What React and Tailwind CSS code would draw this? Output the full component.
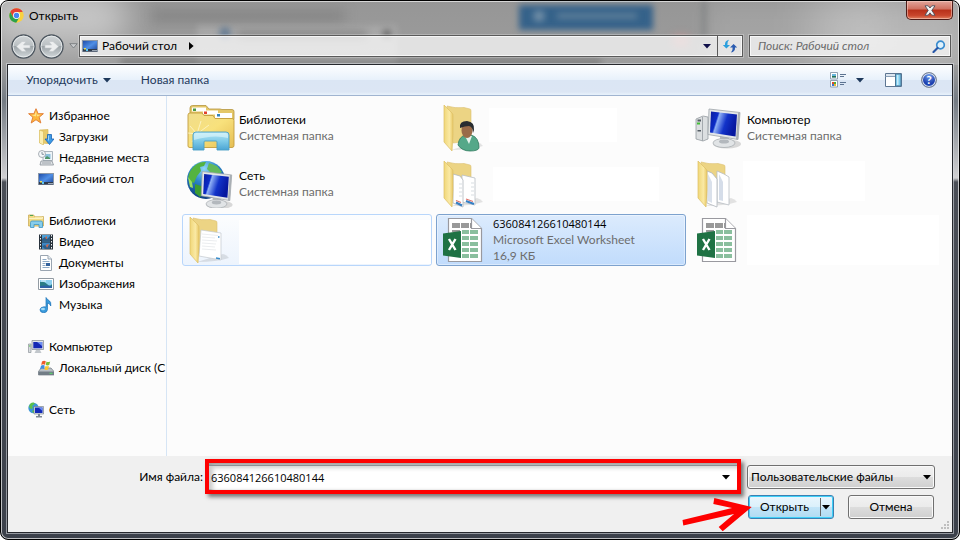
import React from "react";

const Desktop = () => (
  <svg width="16" height="16" viewBox="0 0 16 16" className="shrink-0">
    <defs>
      <linearGradient id="desk" x1="0" y1="0" x2="1" y2="1">
        <stop offset="0" stopColor="#1b49a5" />
        <stop offset=".5" stopColor="#4f8fe6" />
        <stop offset="1" stopColor="#1a3f92" />
      </linearGradient>
    </defs>
    <rect x=".5" y="2.500" width="15" height="11" fill="url(#desk)" stroke="#8a97a8" />
    <rect x="1" y="11" width="14" height="2.500" fill="#303b4c" />
    <path d="M2 10h2v1.500H2z" fill="#e9e05a" />
    <path d="M4 11h2v2H4z" fill="#59c5f2" />
    <path d="M10 12h5v1h-5z" fill="#9ba7b5" />
  </svg>
);

const Star = () => (
  <svg width="16" height="16" viewBox="0 0 16 16" className="shrink-0">
    <path d="M8 .7l2.100 5h5.300l-4.200 3.500 1.600 5.800L8 11.700 3.200 15l1.600-5.800L.6 5.700h5.300z" fill="#fdb73a" stroke="#e2803a" strokeLinejoin="round" />
    <path d="M8 3l1.400 3.700 3.600.1-4 1.700z M8 3L6.700 6.700l-3.500.2L8 8.500z" fill="#ffe48a" />
  </svg>
);

const Downloads = () => (
  <svg width="16" height="16" viewBox="0 0 16 16" className="shrink-0">
    <path d="M2 1l8-.5v14L2 14z" fill="#e8cb6b" stroke="#d1b14e" strokeWidth=".6" />
    <path d="M1.500 1l4 1.500V16l-4-2z" fill="#fbeeb0" stroke="#d6b856" strokeWidth=".6" />
    <path d="M9.500 5.500h4V10H16l-4.500 5.500L7 10h2.500z" fill="#3d9be5" stroke="#1c63b5" strokeWidth=".8" />
    <path d="M10.500 6.500v5" stroke="#9bd3fa" />
  </svg>
);

const Recent = () => (
  <svg width="16" height="16" viewBox="0 0 16 16" className="shrink-0">
    <path d="M5 1.500h9.500v9H5z" fill="#eef4f8" stroke="#98a3ad" strokeWidth=".8" />
    <path d="M7 4h5.500v5H7z" fill="#8cc0dc" />
    <path d="M7 8l2-2 3 2v1H7z" fill="#4f9668" />
    <path d="M3 11h11l1.500 4H2z" fill="#dfe3e6" stroke="#8a9299" strokeWidth=".8" />
    <path d="M4 13h9" stroke="#8a9299" strokeWidth=".8" />
    <circle cx="4" cy="4" r="3.500" fill="#f5f8fa" stroke="#969da5" strokeWidth=".8" />
    <path d="M4 2v2.300h2" fill="none" stroke="#6d7c8b" strokeWidth=".8" />
  </svg>
);

const LibrarySmall = () => (
  <svg width="16" height="16" viewBox="0 0 16 16" className="shrink-0">
    <path d="M.6 2h5l1 1.500h8.800V13H.6z" fill="#f3dc85" stroke="#c5a54c" strokeWidth=".8" />
    <path d="M2 2.500h3" stroke="#4fa552" />
    <path d="M7 4h7.500v1.500H1" stroke="#fff6ce" fill="none" strokeWidth=".8" />
    <path d="M2.500 14.500v-5q0-1.500 1.500-1.500h9q1.500 0 1.500 1.500v5h-3.500v-3h-5v3z" fill="#86cdec" stroke="#3e96c6" strokeWidth=".8" />
  </svg>
);

const Video = () => (
  <svg width="16" height="16" viewBox="0 0 16 16" className="shrink-0">
    <path d="M1 .5h14v15H1z" fill="#28323c" />
    <path d="M4 1h8v6.500H4z" fill="#4e9fd6" />
    <path d="M4 8.500h8V15H4z" fill="#3e86c3" />
    <path d="M4 5l3-2 2 2 3-3v5.500H4zM4 12l3-1 2 2 3-3v5H7z" fill="#2f5e86" />
    <path d="M7 4l2-2v3zM8 11l3-1-2 4z" fill="#dc6340" />
    <path d="M2.500 1v14M13.500 1v14" stroke="#f0f4f7" strokeDasharray="1.500 1.500" />
  </svg>
);

const Doc = () => (
  <svg width="16" height="16" viewBox="0 0 16 16" className="shrink-0">
    <path d="M2.500.5H10L13.500 4v11.500h-11z" fill="#fff" stroke="#9aa5b1" />
    <path d="M10 .5V4h3.500" fill="#e5edf3" stroke="#9aa5b1" />
    <path d="M4.500 4.500h4M4.500 6.500h7M4.500 8.500h3M4.500 10.500h3M4.500 12.500h7" stroke="#8fabc6" />
    <path d="M8 8h4v3H8z" fill="#34639e" />
  </svg>
);

const Picture = () => (
  <svg width="16" height="16" viewBox="0 0 16 16" className="shrink-0">
    <path d="M.5 2.500h15v11H.5z" fill="#fff" stroke="#929ba3" />
    <path d="M2 4h12v8H2z" fill="#8dd0ef" />
    <path d="M2 6q4-1 7 2t5 0v4H2z" fill="#2b7d86" />
    <path d="M2 10q6-1 12 .5V12H2z" fill="#2e62a6" />
    <path d="M3 5h5" stroke="#edf9ff" />
  </svg>
);

const Music = () => (
  <svg width="16" height="16" viewBox="0 0 16 16" className="shrink-0">
    <path d="M8 .5q.6 1.600 3 3t1.800 5.500q-.8-2.500-3.300-3v6.500q-.3 3-3.700 3.300Q2 15.500 2 12.800 2.500 10 6 9.800L8 10z" fill="#3a9bdc" stroke="#1e72b8" strokeWidth=".7" />
    <ellipse cx="5" cy="12" rx="2" ry="1.200" fill="#a4dcf8" />
  </svg>
);

const ComputerSmall = () => (
  <svg width="16" height="16" viewBox="0 0 16 16" className="shrink-0">
    <path d="M.5 5H3v8.500H.5z" fill="#d8dcdf" stroke="#8d9499" strokeWidth=".7" />
    <path d="M1 7h1.500" stroke="#4cbf46" />
    <path d="M4 1.500h11.500v9H4z" fill="#dfe3e8" stroke="#8b939b" strokeWidth=".8" />
    <path d="M5.300 3h9v6.300h-9z" fill="#1428b4" />
    <path d="M9 3h5v4z" fill="#6f8ff0" />
    <path d="M8 11h4l1.500 3H6.500z" fill="#c2c7cc" />
  </svg>
);

const Disk = () => (
  <svg width="16" height="16" viewBox="0 0 16 16" className="shrink-0">
    <path d="M3 8h10l3 3.500V15H.5v-3.500z" fill="#b9c0c6" stroke="#737c84" strokeWidth=".7" />
    <path d="M.5 11.500H16V15H.5z" fill="#727d86" />
    <path d="M11.500 13.300h3" stroke="#58e06a" />
    <path d="M4 1.500q2-1.500 3.800-.3L7 4.700q-2-1-3.800.3z" fill="#ee5b2a" />
    <path d="M8.500 1.500q1.500 1 3.700 0l-1 3.500q-1.700.9-3.500 0z" fill="#79be3c" />
    <path d="M3 5.700q2-1.200 3.700-.2L6 9q-2-1-4 .3z" fill="#3d8ce0" />
    <path d="M7.500 5.900q1.700.9 3.500 0l-1 3.500q-1.700 1-3.500 0z" fill="#fbc62f" />
  </svg>
);

const NetworkSmall = () => (
  <svg width="16" height="16" viewBox="0 0 16 16" className="shrink-0">
    <circle cx="5.500" cy="6" r="5.200" fill="#3b96d8" />
    <path d="M2 2q3-2.500 5-.5L4 4l1 2-2 1-2-2zM5 8l3 1-2 2-2-1z" fill="#5cc14c" />
    <path d="M6 4.500h9.500v7.500H6z" fill="#e0e5ea" stroke="#69737c" strokeWidth=".6" />
    <path d="M7 5.500h7.500V11H7z" fill="#1329b8" />
    <path d="M10.500 5.500h4V9z" fill="#6a8df0" />
    <path d="M10 12h2v2h2v1.500H8V14h2z" fill="#7f8a94" />
  </svg>
);

const Monitor = ({ id }) => (
  <g>
    <defs>
      <linearGradient id={id} x1="0" y1="0" x2="1" y2=".3">
        <stop offset="0" stopColor="#0a1b9c" />
        <stop offset=".3" stopColor="#0c2cc8" />
        <stop offset=".36" stopColor="#8fb0f6" />
        <stop offset=".65" stopColor="#1233c9" />
        <stop offset="1" stopColor="#0718a0" />
      </linearGradient>
    </defs>
    <ellipse cx="33" cy="43" rx="14" ry="4.500" fill="#000" opacity=".14" />
    <path d="M26 33l9 3v5h-9z" fill="#b5babf" />
    <ellipse cx="30" cy="42" rx="11" ry="4.500" fill="#e1e4e6" stroke="#a4a9ae" strokeWidth=".7" />
    <ellipse cx="30" cy="40.500" rx="5" ry="2" fill="#b3b8bd" />
    <path d="M15 8l31 3.500-2 27L14 33.500z" fill="#e3e6e8" stroke="#9ea4a9" strokeWidth=".8" />
    <path d="M44 11.500l2 .2-2 27-2-.5z" fill="#a9afb4" />
    <path d="M17 10.500l26 3-1.500 22L16 31.500z" fill={`url(#${id})`} />
  </g>
);

const ComputerBig = () => (
  <svg width="48" height="48" viewBox="0 0 48 48" className="shrink-0">
    <path d="M1 15l7-3 5 1v22l-5 2-7-2z" fill="#dcdfe1" stroke="#969ca1" strokeWidth=".8" />
    <path d="M7.500 13v24" stroke="#a4a9ae" />
    <path d="M2.500 15.500h3.500v2h-3.500zM2.500 26h3.500v1.500h-3.500z" fill="#555d64" />
    <path d="M2 18.500h3v2H2z" fill="#44bd38" />
    <g transform="translate(-1 -3)">
      <Monitor id="screenA" />
    </g>
  </svg>
);

const NetworkBig = () => (
  <svg width="48" height="48" viewBox="0 0 48 48" className="shrink-0">
    <defs>
      <radialGradient id="globe" cx=".45" cy=".2" r=".8">
        <stop offset="0" stopColor="#8fd8f8" />
        <stop offset=".45" stopColor="#2b86cb" />
        <stop offset="1" stopColor="#0c3d80" />
      </radialGradient>
    </defs>
    <circle cx="19" cy="20" r="19" fill="url(#globe)" />
    <path d="M4 10q6-9 15-8l-2 4-4 1 1 4-4 5-3 7-5-2q-2-5 2-11z" fill="#54b33f" />
    <path d="M22 3l8 3 5 6-5 3-6-2-4-4z" fill="#63b95b" />
    <path d="M8 24l9 3 1 5-5 5-5-4z" fill="#3c9c32" />
    <path d="M1 17l4 5 1 6-3-1z" fill="#9be060" />
    <g transform="translate(1 4) scale(.95)">
      <Monitor id="screenB" />
    </g>
  </svg>
);

const LibraryBig = () => (
  <svg width="48" height="48" viewBox="0 0 48 48" className="shrink-0">
    <defs>
      <linearGradient id="libf" x1="0" y1="0" x2="1" y2="1">
        <stop offset="0" stopColor="#f0dd8c" />
        <stop offset=".5" stopColor="#f8e17c" />
        <stop offset="1" stopColor="#e5bd52" />
      </linearGradient>
      <linearGradient id="libb" x1="0" y1="0" x2="0" y2="1">
        <stop offset="0" stopColor="#b9e8f5" />
        <stop offset=".5" stopColor="#7fcbe8" />
        <stop offset="1" stopColor="#4ba5d4" />
      </linearGradient>
    </defs>
    <path d="M3 14V4q0-2.500 2.500-2.500H19L22 5h11l2 .5h10q2 0 2 2v8H3z" fill="#e4c768" stroke="#b5963f" strokeWidth=".8" />
    <path d="M5 3.500h14v4H5zM16 6.500h15v4H16zM28 9h17v5H28z" fill="#fff" />
    <path d="M6 4.500h3V7H6z" fill="#4b9b45" />
    <path d="M17 7.500h3V10h-3z" fill="#e2412d" />
    <path d="M30 10h3v2.500h-3z" fill="#3283bd" />
    <path d="M1 42V11q0-2 2-2h12l2 2.500h9l2 3h17q2 0 2 2v25q0 2-2 2H3q-2 0-2-1.500z" fill="url(#libf)" stroke="#c39d3e" strokeWidth=".9" />
    <path d="M10 30L3 22M10 30l4-13M10 30l12-9M10 30l-9-1M10 30l-5 8" stroke="#fffbe0" strokeWidth=".8" opacity=".8" />
    <circle cx="10" cy="30" r="2.500" fill="#fff" opacity=".7" />
    <path d="M6 46V31q0-3 3-3h30q3 0 3 3v15H30v-8q0-1-1-1H18q-1 0-1 1v8z" fill="url(#libb)" stroke="#4a9fc6" strokeWidth=".9" />
    <path d="M7 36V31.500q0-2.500 2.500-2.500h29q2.500 0 2.500 2.500V34q-14-4-34 2z" fill="#dff6fb" opacity=".6" />
  </svg>
);

const Folder = ({ id, children }) => (
  <svg width="48" height="48" viewBox="0 0 48 48" className="shrink-0">
    <defs>
      <linearGradient id={id} x1="0" y1="0" x2="1" y2="0">
        <stop offset="0" stopColor="#f0d778" />
        <stop offset=".6" stopColor="#fae9a4" />
        <stop offset="1" stopColor="#e8c866" />
      </linearGradient>
    </defs>
    <path d="M10 46q20 0 32-4-2-3-6-4z" fill="#000" opacity=".1" />
    <path d="M6 2q8 2.500 17 1.500l6 1.500q1 0 1 2v30l-18 2z" fill="#ecd484" stroke="#dcc070" strokeWidth=".6" />
    {children}
    <path d="M3 1l8 8q1 1 1 3v18l-1 17L3 38z" fill={`url(#${id})`} stroke="#dcbe64" strokeWidth=".7" />
  </svg>
);

const PlainFolder = () => (
  <Folder id="fa">
    <path d="M14 14l20 3v27l-22-4z" fill="#fff" stroke="#c3c9ce" strokeWidth=".7" />
    <path d="M15 18l16 1.500M15 21l13 1M15 24l15 1M15 27l14 1M15 30l13 1M15 33l14 1" stroke="#dde1e4" strokeWidth=".6" />
    <path d="M31 21h1.500M29 42l4 .8" stroke="#368bca" strokeWidth="1.500" />
  </Folder>
);

const UserFolder = () => (
  <Folder id="fb">
    <path d="M17 41q1-9 8-10h5q8 2 8 13-1 3-9 3t-12-6z" fill="#55a889" stroke="#317c60" strokeWidth=".8" />
    <path d="M24 32l4 8 3-8z" fill="#e7f3ee" />
    <ellipse cx="26" cy="26.500" rx="5.500" ry="7.500" fill="#9a6b49" />
    <path d="M19 24q-1-7 7-7 8 1 7 9l-1 3q0-6-4-7-4 0-9 2z" fill="#292d31" />
  </Folder>
);

const PagesFolder = () => (
  <Folder id="fc">
    <path d="M21 15l13 3v27l-13-3z" fill="#fff" stroke="#b8bec4" strokeWidth=".8" />
    <path d="M12 14l7 2 3 4v27l-10-4z" fill="#fff" stroke="#b0b6bc" strokeWidth=".8" />
    <path d="M30 23h3M30 27h3M30 31h3M30 35h3M18 24h3M18 28h3M18 32h3M18 36h3" stroke="#bcc6ce" strokeWidth=".6" />
    <path d="M15 42.500l6 3M25 41l8 3" stroke="#357fc4" strokeWidth="2.200" />
    <path d="M15 40.500l5 2M25 39l7 2.500" stroke="#df746c" strokeWidth="1.200" />
  </Folder>
);

const PapersFolder = () => (
  <Folder id="fd">
    <path d="M22 11l7 3 5 3v28l-12-3z" fill="#fff" stroke="#b8bec4" strokeWidth=".8" />
    <path d="M24 14l4 8v19l-4-1z" fill="#d5dde9" />
    <path d="M12 11l5 2 5 6v28l-10-4z" fill="#fff" stroke="#b0b6bc" strokeWidth=".8" />
    <path d="M13 14l4 8v21l-4-2z" fill="#dae1eb" />
  </Folder>
);

const Excel = () => (
  <svg width="48" height="48" viewBox="1 0 48 48" className="shrink-0">
    <path d="M8.500 2.500h23l10 10v33h-33z" fill="#fff" stroke="#99999f" strokeWidth="1.200" />
    <path d="M31.500 2.500v10h10" fill="#fff" stroke="#99999f" strokeWidth="1.200" />
    <path d="M12 7h8v5h-8zM21 7h8v5h-8zM12 14h8v2h-8zM30 7h1v5h-1z" fill="#999" />
    <path d="M22 14h7v4h-7zM30 14h8v4h-8zM22 20h7v4h-7zM30 20h8v4h-8zM22 26h7v4h-7zM30 26h8v4h-8zM22 32h7v4h-7zM30 32h8v4h-8zM22 38h7v4h-7zM30 38h8v4h-8z" fill="#8abf9e" />
    <path d="M3 17.500L21 15v27L3 39.500z" fill="#1f7244" />
    <path d="M9 23l6.500 11M15.500 23L9 34" stroke="#fff" strokeWidth="2.400" />
  </svg>
);

const Down = ({ className = "" }) => (
  <svg width="8" height="5" viewBox="0 0 8 5" className={"shrink-0 " + className}>
    <path d="M0 0h8L4 4.600z" fill="currentColor" />
  </svg>
);

const groups = [
  { icon: Star, name: "Избранное", items: [[Downloads, "Загрузки"], [Recent, "Недавние места"], [Desktop, "Рабочий стол"]] },
  { icon: LibrarySmall, name: "Библиотеки", items: [[Video, "Видео"], [Doc, "Документы"], [Picture, "Изображения"], [Music, "Музыка"]] },
  { icon: ComputerSmall, name: "Компьютер", items: [[Disk, "Локальный диск (C"]] },
  { icon: NetworkSmall, name: "Сеть", items: [] },
];

const files = [
  { icon: LibraryBig, name: "Библиотеки", lines: ["Системная папка"] },
  { icon: UserFolder, blank: "w-32 h-[34px] -ml-1 -mt-1.5" },
  { icon: ComputerBig, name: "Компьютер", lines: ["Системная папка"] },
  { icon: NetworkBig, name: "Сеть", lines: ["Системная папка"] },
  { icon: PagesFolder, blank: "w-[166px] h-[34px]" },
  { icon: PapersFolder, blank: "w-[122px] h-10 -ml-1 -mt-1.5" },
  { icon: PlainFolder, blank: "flex-1 h-11 mt-1" },
  { icon: Excel, name: "636084126610480144", lines: ["Microsoft Excel Worksheet", "16,9 КБ"], state: "selected", digits: true },
  { icon: Excel, blank: "flex-1 h-[50px]" },
];
files[6].state = "hover";

const stateClass = {
  hover: "border-[#b8d6fb] bg-linear-to-b from-[#fcfdfe] to-[#edf4fd]",
  selected: "border-[#7da2ce] bg-linear-to-b from-[#dcebfd] to-[#c1dcfc] shadow-[inset_0_0_0_1px_rgba(255,255,255,0.4)]",
  none: "border-transparent",
};

const digitFont = "font-['Open_Sans','Noto_Sans',sans-serif] text-[11px]";

const FileItem = ({ file }) => {
  const Icon = file.icon;
  return (
    <button className={"flex h-[52px] min-w-0 items-center gap-1 rounded-[3px] border pl-1 text-left " + stateClass[file.state || "none"]}>
      <Icon />
      {file.blank ? (
        <span className={"bg-white " + file.blank} />
      ) : (
        <span className="min-w-0">
          <span className={"block truncate " + (file.digits ? digitFont : "")}>{file.name}</span>
          {file.lines.map((l) => (
            <span key={l} className="block truncate text-[#6d6d6d]">{l}</span>
          ))}
        </span>
      )}
    </button>
  );
};

const Backdrop = () => (
  <div aria-hidden="true" className="absolute inset-x-0 top-0 h-16 overflow-hidden">
    <div className="absolute -left-4 -top-3 h-14 w-36 rounded-full bg-white/45 blur-lg" />
    <div className="absolute left-[150px] top-[9px] h-3 w-[194px] bg-[#707070]/45 blur-[6px]" />
    <div className="absolute left-[196px] top-[24px] h-10 w-[200px] bg-white/15 blur-[3px]" />
    <div className="absolute left-[218px] top-[26px] h-3 w-3 rounded-full bg-[#55708d]/80 blur-[3px]" />
    <div className="absolute left-[236px] top-[30px] h-2 w-[130px] bg-[#666]/50 blur-[4px]" />
    <div className="absolute left-[382px] top-[29px] h-2 w-2 bg-[#555]/80 blur-[3px]" />
    <div className="absolute left-[120px] top-[58px] h-1.5 w-[480px] bg-[#555]/45 blur-[3px]" />
    <div className="absolute left-[518px] top-[4px] h-[25px] w-[134px] bg-[#35628a] blur-[3px]" />
    <div className="absolute left-[532px] top-[9px] h-3 w-3 rounded-full bg-[#7d97ac]/80 blur-[3px]" />
    <div className="absolute left-[556px] top-[12px] h-1.5 w-[80px] bg-[#66849d]/80 blur-[3px]" />
    <div className="absolute left-[701px] top-0 h-9 w-1 bg-[#6e7273]/70 blur-[3px]" />
    <div className="absolute left-[706px] top-0 h-16 w-[180px] bg-white/10 blur-md" />
    <div className="absolute left-[672px] top-[34px] h-3 w-4 bg-[#e09090]/50 blur-[4px]" />
    <div className="absolute -right-4 -top-2 h-20 w-40 bg-white/30 blur-xl" />
  </div>
);

const NavButtons = () => (
  <div className="flex shrink-0 items-center gap-[3px]">
    {["Назад", "Вперёд"].map((label, i) => (
      <button key={label} aria-label={label} className="h-[25px] w-[25px]">
        <svg width="25" height="25" viewBox="0 0 25 25">
          <defs>
            <linearGradient id={"nav" + i} x1="0" y1="0" x2="0" y2="1">
              <stop offset="0" stopColor="#d3d7d9" />
              <stop offset=".48" stopColor="#b9bfc2" />
              <stop offset=".5" stopColor="#9da4a8" />
              <stop offset="1" stopColor="#d4dadd" />
            </linearGradient>
          </defs>
          <circle cx="12.500" cy="12.500" r="11.500" fill={`url(#nav${i})`} stroke="#4f5861" strokeWidth="1.400" />
          <circle cx="12.500" cy="12.500" r="10.400" fill="none" stroke="#e9eced" strokeWidth=".9" />
          <path d={i ? "M6 11h6.500L10 7.500h4l5.500 5-5.500 5h-4l2.500-3.500H6z" : "M19 11h-6.500L15 7.500h-4l-5.500 5 5.500 5h4L12.500 14H19z"} fill="#eceeef" stroke="#c3c8cb" strokeWidth=".6" />
        </svg>
      </button>
    ))}
    <button aria-label="Последние страницы" className="flex w-3 justify-center">
      <svg width="9" height="6" viewBox="0 0 9 6">
        <path d="M.8.7h7.400L4.500 5z" fill="#c9cbcd" stroke="#6f7376" strokeWidth=".8" />
      </svg>
    </button>
  </div>
);

export default function App() {
  return (
    <div className="relative flex min-h-screen flex-col overflow-hidden rounded-lg border border-black bg-[linear-gradient(180deg,#969696_0px,#9d9d9d_64px,#747b83_100px,#d0d0d2_177px,#4b4f57_181px,#3c414b_100%)] px-1.5 pb-1.5 font-['Lato','Open_Sans',sans-serif] text-[12px] leading-4 text-black shadow-[inset_0_0_0_1px_rgba(235,235,235,0.75)]">
      <Backdrop />
      <header className="relative">
        <div className="flex h-[29px] items-center gap-[5px] pl-0.5">
          <svg width="15" height="15" viewBox="0 0 48 48" className="shrink-0">
            <circle cx="24" cy="24" r="23" fill="#f9d13f" />
            <path d="M24 13h20A23 23 0 0 0 4 12.500L14 30z" fill="#e34133" />
            <path d="M4 12.500A23 23 0 0 0 23 47l11-18-10 5-10-4z" fill="#2ba24c" />
            <circle cx="24" cy="24" r="11" fill="#fff" />
            <circle cx="24" cy="24" r="8.500" fill="#4587f0" />
          </svg>
          <h1 className="flex-1">Открыть</h1>
          <button aria-label="Закрыть" className="flex h-[19px] w-[47px] items-center justify-center self-start rounded-b-[5px] border border-t-0 border-[#4d1c18] bg-[linear-gradient(180deg,#e2a59b_0%,#d0705f_45%,#b8301a_50%,#c8452c_80%,#e08060_100%)] shadow-[inset_0_0_0_1px_rgba(255,220,210,0.5)]">
            <svg width="12" height="11" viewBox="0 0 12 11">
              <path d="M1 .8h3.200L6 3 7.800.8H11L7.800 5.400 11 10.200H7.800L6 7.800l-1.800 2.400H1l3.200-4.800z" fill="#f5f5f5" stroke="#4c505c" strokeWidth=".9" />
            </svg>
          </button>
        </div>
        <div className="flex h-[34px] items-center pb-0.5 pl-1 pr-0.5">
          <NavButtons />
          <div className="mr-1.5 flex h-[22px] min-w-0 flex-1 items-stretch border border-[#5a5a5a] bg-white/70 shadow-[inset_0_0_0_1px_rgba(255,255,255,0.7),0_0_0_1px_rgba(255,255,255,0.25)]">
            <button className="flex items-center gap-1 pl-0.5">
              <Desktop />
              <span>Рабочий стол</span>
              <svg width="5" height="8" viewBox="0 0 5 8" className="ml-2">
                <path d="M0 0v8l4.600-4z" fill="#000" />
              </svg>
            </button>
            <span className="flex-1" />
            <button aria-label="Предыдущие расположения" className="flex w-5 items-center justify-center text-[#10104a]">
              <Down />
            </button>
            <button aria-label="Обновить" className="flex w-[25px] items-center justify-center border-l border-[#5a5a5a]">
              <svg width="16" height="14" viewBox="0 0 16 14">
                <path d="M7 .8Q2.600 1.600 3 6H.8l3.600 3.600L8 6H5.400Q5 3 7 .8z" fill="#2a9fdd" />
                <path d="M9 13.500q4.400-.8 4-5h2.200l-3.600-3.600L8 8.500h2.600q.4 3-1.600 5z" fill="#2b5cb0" />
              </svg>
            </button>
          </div>
          <div className="flex h-[22px] w-[202px] items-center border border-[#5a5a5a] bg-white/70 pr-1 shadow-[inset_0_0_0_1px_rgba(255,255,255,0.7),0_0_0_1px_rgba(255,255,255,0.25)]">
            <input aria-label="Поиск" placeholder="Поиск: Рабочий стол" className="min-w-0 flex-1 bg-transparent pl-2 italic outline-none placeholder:text-[#6b6b6b]" />
            <button aria-label="Найти">
              <svg width="14" height="13" viewBox="0 0 14 13" className="block">
                <circle cx="8.500" cy="5" r="3.800" fill="#dff1fb" stroke="#3a8ccf" strokeWidth="1.700" />
                <path d="M5.500 8L1.500 12" stroke="#2857a8" strokeWidth="2.200" strokeLinecap="round" />
              </svg>
            </button>
          </div>
        </div>
      </header>

      <main className="relative flex flex-1 flex-col border border-[#26282d] bg-[#fcfcfc] shadow-[0_0_0_1px_rgba(220,224,230,0.55)]">
        <div className="flex h-[31px] items-center border-b border-[#a0b4d0] bg-[linear-gradient(180deg,#fdfeff_0%,#e8f1fb_49%,#dbe6f4_50%,#dce6f4_90%,#e6f0fa_97%)] pl-[18px] pr-[15px] text-[#1e395b]">
          <button className="flex items-center gap-[5px]">
            Упорядочить
            <Down />
          </button>
          <button className="ml-[30px]">Новая папка</button>
          <span className="flex-1" />
          <button aria-label="Изменить представление" className="flex items-center gap-2.5">
            <svg width="16" height="16" viewBox="0 0 16 16">
              <path d="M.5.500h7v6.500h-7zM.5 8.500h7V15h-7z" fill="#fff" stroke="#8797a8" strokeWidth=".9" />
              <path d="M2 2h4v3.500H2z" fill="#67b5dc" />
              <path d="M2 4h4v1.500H2z" fill="#28704e" />
              <path d="M2 10h2v2H2z" fill="#db4b2d" />
              <path d="M4 10h2v2H4z" fill="#4cae3d" />
              <path d="M2 12h2v2H2z" fill="#3d6fd0" />
              <path d="M4 12h2v2H4z" fill="#f0b82c" />
              <path d="M10 2.500h6M10 4.500h4M10 10.500h6M10 12.500h4" stroke="#5c7391" />
            </svg>
            <Down />
          </button>
          <button aria-label="Область просмотра" className="ml-[21px]">
            <svg width="17" height="14" viewBox="0 0 17 14" className="block">
              <path d="M.5.500h16v13H.5z" fill="#fff" stroke="#5e7692" />
              <path d="M1 1h15v2H1z" fill="#dbe5ef" />
              <path d="M.5 3.500h9.500" stroke="#8ba0b7" />
              <path d="M10.500 1h5.500v12h-5.500z" fill="#7ccaec" stroke="#4a7595" />
              <path d="M12 2h1.500v10H12z" fill="#c8ebf8" />
            </svg>
          </button>
          <button aria-label="Справка" className="ml-[19px] flex h-4 w-4 items-center justify-center rounded-full border border-[#7d8795] bg-[radial-gradient(circle_at_50%_20%,#6d9bea,#1c3fae_60%,#2b62d0)] text-[12px] font-bold leading-3 text-white shadow-[inset_0_0_0_1px_#dfe4ea]">
            ?
          </button>
        </div>

        <div className="flex min-h-0 flex-1">
          <nav className="w-[159px] shrink-0 space-y-[21px] overflow-hidden border-r border-[#d6e5f5] pl-5 pt-[9px]">
            {groups.map((g) => (
              <section key={g.name}>
                <a href="#" className="flex h-[21px] items-center gap-[5px] whitespace-nowrap">
                  <g.icon />
                  {g.name}
                </a>
                {g.items.map(([Icon, name]) => (
                  <a key={name} href="#" className="flex h-[21px] items-center gap-[5px] whitespace-nowrap pl-2.5">
                    <Icon />
                    {name}
                  </a>
                ))}
              </section>
            ))}
          </nav>
          <div className="grid flex-1 grid-cols-3 content-start gap-1 pb-2 pl-[15px] pr-3 pt-1.5">
            {files.map((f, i) => (
              <FileItem key={i} file={f} />
            ))}
          </div>
        </div>

        <form className="relative h-[76px] bg-[#f0f0f0] pr-[17px] pt-[3px]" onSubmit={(e) => e.preventDefault()}>
          <div className="flex items-center">
            <label htmlFor="filename" className="w-[195px] shrink-0 text-right">Имя файла:</label>
            <div className="ml-0.5 mr-1.5 flex h-[35px] min-w-0 flex-1 border-4 border-[#fe0000] bg-[#f0f0f0] pb-px pt-0.5 shadow-[3px_3px_4px_rgba(0,0,0,0.5),inset_3px_3px_4px_rgba(0,0,0,0.35)]">
              <div className="flex flex-1 items-center border-t border-[#8b8f96] bg-white shadow-[inset_4px_2px_4px_rgba(0,0,0,0.2)]">
                <input id="filename" defaultValue="636084126610480144" className="min-w-0 flex-1 bg-transparent pl-0.5 font-['Open_Sans','Noto_Sans',sans-serif] text-[11px] outline-none" />
                <button type="button" aria-label="Показать список" className="flex w-[22px] items-center justify-center">
                  <Down />
                </button>
              </div>
            </div>
            <div className="relative w-[188px] shrink-0">
              <select aria-label="Тип файлов" className="block h-6 w-full appearance-none rounded-[3px] border border-[#707070] bg-[linear-gradient(180deg,#f2f2f2_0%,#ebebeb_49%,#dddddd_50%,#cfcfcf_100%)] pl-[3px] pr-3 shadow-[inset_0_0_0_1px_#fafafa] outline-none">
                <option>Пользовательские файлы</option>
              </select>
              <Down className="pointer-events-none absolute right-1 top-2.5" />
            </div>
          </div>
          <div className="mt-px flex justify-end gap-3.5 pr-px">
            <div className="flex h-6 w-[86px] rounded-[3px] border border-[#3c7fb1] bg-[linear-gradient(180deg,#eaf6fd_0%,#dbf0fb_49%,#c3e5f8_50%,#b0dbf2_100%)] shadow-[inset_0_0_0_1px_#3fd0f8]">
              <button type="submit" className="flex-1">Открыть</button>
              <button type="button" aria-label="Варианты открытия" className="my-0.5 flex w-[13px] items-center justify-center border-l border-[#666] pr-0.5">
                <Down />
              </button>
            </div>
            <button type="button" className="h-6 w-[86px] rounded-[3px] border border-[#707070] bg-[linear-gradient(180deg,#f2f2f2_0%,#ebebeb_49%,#dddddd_50%,#cfcfcf_100%)] shadow-[inset_0_0_0_1px_#fafafa]">
              Отмена
            </button>
          </div>
          <svg aria-hidden="true" width="70" height="36" viewBox="0 0 70 36" className="pointer-events-none absolute bottom-0 right-[200px]">
            <path d="M.5 24L50 12 31.300 8l1-6L69.700 11l-29 24.300-4-4.300L52 18 1.300 29.500z" fill="#fe0000" />
          </svg>
          <svg aria-hidden="true" width="9" height="9" viewBox="0 0 9 9" className="absolute bottom-0.5 right-0.5">
            <path d="M6 0h2v2H6zM3 3h2v2H3zM6 3h2v2H6zM0 6h2v2H0zM3 6h2v2H3zM6 6h2v2H6z" fill="#bfbfbf" />
          </svg>
        </form>
      </main>
    </div>
  );
}
